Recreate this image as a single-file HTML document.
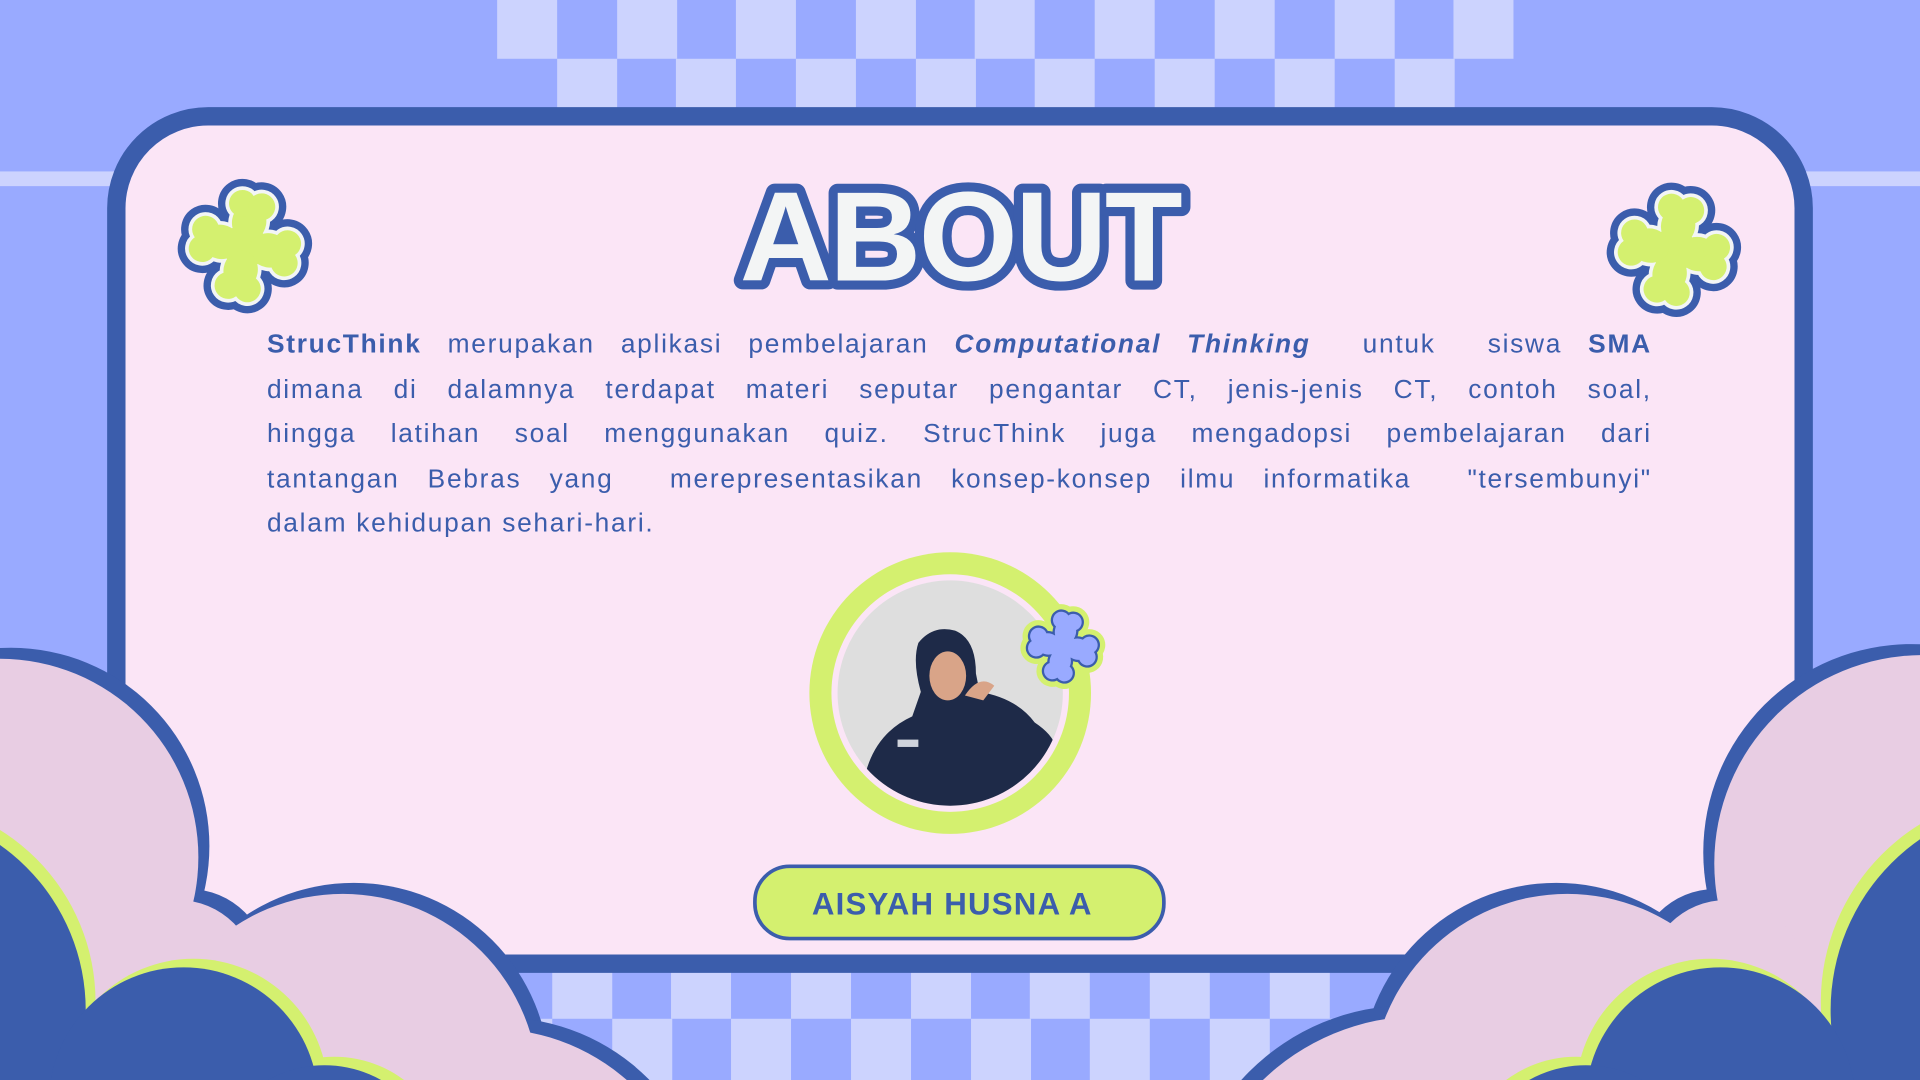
<!DOCTYPE html>
<html><head><meta charset="utf-8"><style>
html,body{margin:0;padding:0;width:1920px;height:1080px;overflow:hidden;background:#99aaff}
#s{position:absolute;left:0;top:0;width:1568px;height:882px;transform:scale(1.2244898);transform-origin:0 0;overflow:hidden}
svg{position:absolute;left:0;top:0}
.p{position:absolute;left:218px;width:1131px;font-family:"Liberation Sans",sans-serif;font-size:21.5px;color:#3b5dac;letter-spacing:1.4px;line-height:36.6px;top:263px}
.p div{text-align:justify;text-align-last:justify;white-space:nowrap}
.p div.l{text-align-last:left}
.btn{position:absolute;left:615px;top:706px;width:331px;height:56px;border:3.5px solid #3b5dac;border-radius:30px;background:#d4f06f;font-family:"Liberation Sans",sans-serif;font-weight:bold;font-size:25.5px;color:#3b5dac;line-height:60px;box-sizing:content-box}
.btn span{position:absolute;left:45px;letter-spacing:1px}
</style></head><body><div id="s">
<svg width="1568" height="882" viewBox="0 0 1568 882">
<defs>
<g id="clv">
<circle cx="0" cy="0" r="18"/>
<g id="pet"><ellipse cx="0" cy="-20" rx="14" ry="16"/><circle cx="-8" cy="-34" r="11"/><circle cx="8" cy="-34" r="11"/></g>
<use href="#pet" transform="rotate(90)"/><use href="#pet" transform="rotate(180)"/><use href="#pet" transform="rotate(270)"/>
</g>
</defs>
<!-- top checker -->
<g fill="#ccd3fe">
<rect x="406" y="0" width="49" height="48"/><rect x="504" y="0" width="49" height="48"/><rect x="601" y="0" width="49" height="48"/><rect x="699" y="0" width="49" height="48"/><rect x="796" y="0" width="49" height="48"/><rect x="894" y="0" width="49" height="48"/><rect x="992" y="0" width="49" height="48"/><rect x="1090" y="0" width="49" height="48"/><rect x="1187" y="0" width="49" height="48"/>
<rect x="455" y="48" width="49" height="42"/><rect x="552" y="48" width="49" height="42"/><rect x="650" y="48" width="49" height="42"/><rect x="748" y="48" width="49" height="42"/><rect x="845" y="48" width="49" height="42"/><rect x="943" y="48" width="49" height="42"/><rect x="1041" y="48" width="49" height="42"/><rect x="1139" y="48" width="49" height="42"/>
<rect x="0" y="140" width="95" height="12"/><rect x="1470" y="140" width="98" height="12"/>
</g>
<!-- bottom checker -->
<g fill="#ccd3fe">
<rect x="451" y="794" width="49" height="38"/><rect x="548" y="794" width="49" height="38"/><rect x="646" y="794" width="49" height="38"/><rect x="744" y="794" width="49" height="38"/><rect x="841" y="794" width="49" height="38"/><rect x="939" y="794" width="49" height="38"/><rect x="1037" y="794" width="49" height="38"/>
<rect x="402" y="832" width="49" height="50"/><rect x="500" y="832" width="49" height="50"/><rect x="597" y="832" width="49" height="50"/><rect x="695" y="832" width="49" height="50"/><rect x="793" y="832" width="49" height="50"/><rect x="890" y="832" width="49" height="50"/><rect x="988" y="832" width="49" height="50"/><rect x="1086" y="832" width="49" height="50"/>
</g>
<!-- card -->
<rect x="95" y="95" width="1378" height="692" rx="75" fill="#fbe5f6" stroke="#3b5dac" stroke-width="15"/>
<!-- title -->
<text x="784" y="229" text-anchor="middle" font-family="Liberation Sans, sans-serif" font-weight="900" font-size="104" letter-spacing="-2" fill="#f3f5f5" stroke="#3b5dac" stroke-width="15" stroke-linejoin="round" paint-order="stroke">ABOUT</text>
<!-- left clouds -->
<g fill="#3b5dac" transform="translate(9,-9)">
<circle cx="0" cy="700" r="162"/><circle cx="145" cy="800" r="65"/><circle cx="280" cy="890" r="160"/><circle cx="400" cy="1010" r="170"/>
</g>
<g fill="#e8cde3">
<circle cx="0" cy="700" r="162"/><circle cx="145" cy="800" r="65"/><circle cx="280" cy="890" r="160"/><circle cx="400" cy="1010" r="170"/>
</g>
<g fill="#d4f06f" transform="translate(8,-7)">
<circle cx="-95" cy="825" r="165"/><circle cx="150" cy="900" r="110"/><circle cx="265" cy="965" r="95"/>
</g>
<g fill="#3b5dac">
<circle cx="-95" cy="825" r="165"/><circle cx="150" cy="900" r="110"/><circle cx="265" cy="965" r="95"/>
</g>
<!-- right clouds -->
<g fill="#3b5dac" transform="translate(-9,-9)">
<circle cx="1570" cy="705" r="170"/><circle cx="1410" cy="800" r="65"/><circle cx="1280" cy="890" r="160"/><circle cx="1160" cy="1015" r="185"/>
</g>
<g fill="#e8cde3">
<circle cx="1570" cy="705" r="170"/><circle cx="1410" cy="800" r="65"/><circle cx="1280" cy="890" r="160"/><circle cx="1160" cy="1015" r="185"/>
</g>
<g fill="#d4f06f" transform="translate(-8,-7)">
<circle cx="1665" cy="825" r="170"/><circle cx="1405" cy="900" r="110"/><circle cx="1295" cy="965" r="95"/>
</g>
<g fill="#3b5dac">
<circle cx="1665" cy="825" r="170"/><circle cx="1405" cy="900" r="110"/><circle cx="1295" cy="965" r="95"/>
</g>
<!-- clovers -->
<g transform="translate(200,201) rotate(10)">
<use href="#clv" fill="#3b5dac" stroke="#3b5dac" stroke-width="18"/>
<use href="#clv" fill="#f3f5f5" stroke="#f3f5f5" stroke-width="6"/>
<use href="#clv" fill="#d4f06f"/>
</g>
<g transform="translate(1367,204) rotate(10)">
<use href="#clv" fill="#3b5dac" stroke="#3b5dac" stroke-width="18"/>
<use href="#clv" fill="#f3f5f5" stroke="#f3f5f5" stroke-width="6"/>
<use href="#clv" fill="#d4f06f"/>
</g>
<!-- photo -->
<circle cx="776" cy="566" r="115" fill="#d4f06f"/>
<circle cx="776" cy="566" r="97" fill="#fbe5f6"/>
<clipPath id="pc"><circle cx="776" cy="566" r="92"/></clipPath>
<g clip-path="url(#pc)">
<rect x="680" y="470" width="200" height="200" fill="#dedede"/>
<path d="M705 640 Q712 600 745 585 L752 565 Q745 540 750 525 Q762 510 780 515 Q797 522 797 550 L800 565 Q830 570 845 590 Q860 600 862 610 L850 640 L850 680 L700 680 Z" fill="#1e2a48"/>
<ellipse cx="774" cy="552" rx="15" ry="20" fill="#d9a488"/>
<path d="M788 568 Q800 550 812 560 L803 572 Z" fill="#d9a488"/>
<rect x="733" y="604" width="17" height="6" fill="#cfd3dc"/>
</g>
<!-- small blue flower -->
<g transform="translate(868,528) rotate(10) scale(0.62)">
<use href="#clv" fill="#d4f06f" stroke="#d4f06f" stroke-width="20"/>
<use href="#clv" fill="#3b5dac" stroke="#3b5dac" stroke-width="6"/>
<use href="#clv" fill="#99aaff"/>
</g>
</svg>
<div class="p">
<div><b>StrucThink</b> merupakan aplikasi pembelajaran <b><i>Computational Thinking</i></b> &nbsp;untuk &nbsp;siswa <b>SMA</b></div>
<div>dimana di dalamnya terdapat materi seputar pengantar CT, jenis-jenis CT, contoh soal,</div>
<div>hingga latihan soal menggunakan quiz. StrucThink juga mengadopsi pembelajaran dari</div>
<div>tantangan Bebras yang &nbsp;merepresentasikan konsep-konsep ilmu informatika &nbsp;"tersembunyi"</div>
<div class="l">dalam kehidupan sehari-hari.</div>
</div>
<div class="btn"><span>AISYAH HUSNA A</span></div>
</div></body></html>
